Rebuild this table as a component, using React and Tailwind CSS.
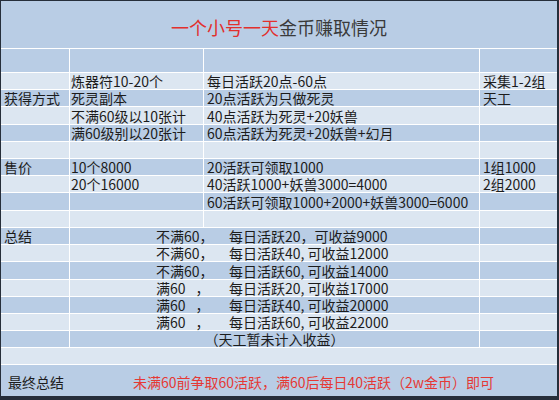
import React from 'react';

const MID = 'bg-[#b9cde5]';
const LIGHT = 'bg-[#dce6f1]';

// rows 2..10 under the header
const tableRows = [
  { tone: LIGHT, cells: ['', '炼器符10-20个', '每日活跃20点-60点', '采集1-2组'] },
  { tone: MID, cells: ['获得方式', '死灵副本', '20点活跃为只做死灵', '天工'] },
  { tone: LIGHT, cells: ['', '不满60级以10张计', '40点活跃为死灵+20妖兽', ''] },
  { tone: MID, cells: ['', '满60级别以20张计', '60点活跃为死灵+20妖兽+幻月', ''] },
  { tone: LIGHT, cells: ['', '', '', ''] },
  { tone: MID, cells: ['售价', '10个8000', '20活跃可领取1000', '1组1000'] },
  { tone: LIGHT, cells: ['', '20个16000', '40活跃1000+妖兽3000=4000', '2组2000'] },
  { tone: MID, cells: ['', '', '60活跃可领取1000+2000+妖兽3000=6000', ''] },
  { tone: LIGHT, cells: ['', '', '', ''] },
];

const summaryRows = [
  { tone: MID, label: '总结', left: '不满60，', right: '每日活跃20，可收益9000' },
  { tone: LIGHT, label: '', left: '不满60，', right: '每日活跃40, 可收益12000' },
  { tone: MID, label: '', left: '不满60，', right: '每日活跃60, 可收益14000' },
  { tone: LIGHT, label: '', left: '满60', comma: true, right: '每日活跃20, 可收益17000' },
  { tone: MID, label: '', left: '满60', comma: true, right: '每日活跃40, 可收益20000' },
  { tone: LIGHT, label: '', left: '满60', comma: true, right: '每日活跃60, 可收益22000' },
];

const Cell = ({ tone, className = '', children }) => (
  <div className={`${tone} flex items-center whitespace-nowrap leading-[14px] ${className}`}>
    {children}
  </div>
);

export default function App() {
  return (
    <div className="w-[559px] h-[400px] bg-[#262e3a] pt-px pl-px pr-[2px] pb-[4px] text-[14px] text-[#1c1c1c]"
      style={{ fontFamily: '"Noto Sans CJK SC", "Noto Sans", sans-serif' }}>
      <div className="grid h-full gap-px bg-white grid-cols-[68px_133px_275px_1fr] grid-rows-[47px_23px_16px_16px_17px_16px_16px_16px_16px_17px_16px_16px_16px_17px_16px_16px_16px_16px_16px_31px]">
        <div className={`${MID} col-span-4 flex items-center justify-center pt-[5px] text-[18px] leading-[18px]`}>
          <span className="text-[#e2302d]">一个小号一天</span>
          <span className="text-[#3a3a3a]">金币赚取情况</span>
        </div>

        {[0, 1, 2, 3].map((i) => (
          <Cell key={`h${i}`} tone={MID} />
        ))}

        {tableRows.map((row, r) =>
          row.cells.map((text, c) => (
            <Cell key={`${r}-${c}`} tone={row.tone} className={c === 1 ? 'pl-[1px]' : 'pl-[3px]'}>
              {text}
            </Cell>
          ))
        )}

        {summaryRows.map((row, r) => (
          <React.Fragment key={`s${r}`}>
            <Cell tone={row.tone} className="pl-[3px]">{row.label}</Cell>
            <Cell tone={row.tone} className="col-span-2 pl-[86px]">
              <span className="inline-block w-[73px]">
                {row.left}
                {row.comma && <span className="ml-[10px]">，</span>}
              </span>
              <span>{row.right}</span>
            </Cell>
            <Cell tone={row.tone} />
          </React.Fragment>
        ))}

        <Cell tone={MID} />
        <Cell tone={MID} className="col-span-2 justify-center">（天工暂未计入收益）</Cell>
        <Cell tone={MID} />

        <Cell tone={LIGHT} className="col-span-4" />

        <div className={`${MID} col-span-4 flex items-center leading-[14px] pt-[2px]`}>
          <span className="w-[69px] pl-[7px]">最终总结</span>
          <span className="flex-1 text-center text-[#e53935]">未满60前争取60活跃，满60后每日40活跃（2w金币）即可</span>
        </div>
      </div>
    </div>
  );
}
